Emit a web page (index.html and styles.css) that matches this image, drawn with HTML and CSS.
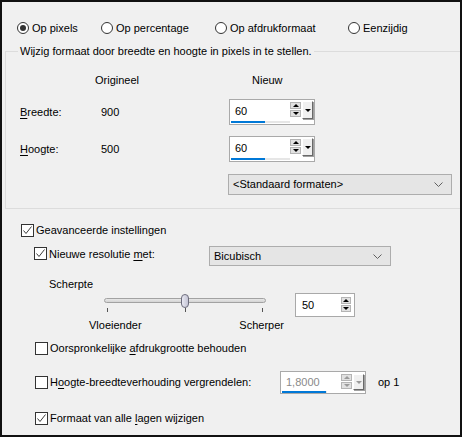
FILE: index.html
```html
<!DOCTYPE html>
<html lang="nl">
<head>
    <meta charset="UTF-8">
    <title>Formaat wijzigen</title>
    <link rel="stylesheet" href="styles.css">
</head>
<body>
    <div class="dialog">
        <div class="modes">
            <label class="radio-item"><span class="radio on"></span>Op pixels</label>
            <label class="radio-item"><span class="radio"></span>Op percentage</label>
            <label class="radio-item"><span class="radio"></span>Op afdrukformaat</label>
            <label class="radio-item"><span class="radio"></span>Eenzijdig</label>
        </div>

        <fieldset class="group">
            <legend>Wijzig formaat door breedte en hoogte in pixels in te stellen.</legend>
            <div class="size-grid">
                <span class="head"></span>
                <span class="head orig">Origineel</span>
                <span class="head new">Nieuw</span>

                <span class="lbl"><u>B</u>reedte:</span>
                <span class="val">900</span>
                <div class="spin">
                    <div class="spin-main">
                        <span class="spin-val">60</span>
                        <span class="spin-bar"><b style="width:34px"></b></span>
                    </div>
                    <div class="spin-btns"><i class="up"></i><i class="dn"></i></div>
                    <div class="spin-drop"><i class="dn"></i></div>
                </div>

                <span class="lbl"><u>H</u>oogte:</span>
                <span class="val">500</span>
                <div class="spin">
                    <div class="spin-main">
                        <span class="spin-val">60</span>
                        <span class="spin-bar"><b style="width:34px"></b></span>
                    </div>
                    <div class="spin-btns"><i class="up"></i><i class="dn"></i></div>
                    <div class="spin-drop"><i class="dn"></i></div>
                </div>

                <div class="select preset">
                    <span>&lt;Standaard formaten&gt;</span>
                    <svg class="chev" width="9" height="5" viewBox="0 0 9 5"><polyline points="0.5,0.5 4.5,4.5 8.5,0.5" fill="none" stroke="#606060"/></svg>
                </div>
            </div>
        </fieldset>

        <div class="check-row first">
            <span class="check on"><svg width="11" height="11" viewBox="0 0 11 11"><polyline points="1.5,5.5 4,8.5 9.5,1.5" fill="none" stroke="#3c3c3c" stroke-width="1"/></svg></span>
            <span>Geavanceerde instellingen</span>
        </div>

        <div class="check-row resample">
            <span class="check on"><svg width="11" height="11" viewBox="0 0 11 11"><polyline points="1.5,5.5 4,8.5 9.5,1.5" fill="none" stroke="#3c3c3c" stroke-width="1"/></svg></span>
            <span class="resample-text">Nieuwe resolutie <u>m</u>et:</span>
            <div class="select method">
                <span>Bicubisch</span>
                <svg class="chev" width="9" height="5" viewBox="0 0 9 5"><polyline points="0.5,0.5 4.5,4.5 8.5,0.5" fill="none" stroke="#606060"/></svg>
            </div>
        </div>

        <div class="sharpness">
            <div class="sharp-label">Scherpte</div>
            <div class="sharp-row">
                <div class="slider">
                    <div class="slider-track">
                        <span class="track"></span>
                        <span class="thumb"></span>
                    </div>
                    <div class="ticks"><i></i><i></i><i></i></div>
                    <div class="slider-labels"><span>Vloeiender</span><span>Scherper</span></div>
                </div>
                <div class="spin small">
                    <div class="spin-main">
                        <span class="spin-val">50</span>
                    </div>
                    <div class="spin-btns"><i class="up"></i><i class="dn"></i></div>
                </div>
            </div>
        </div>

        <div class="check-row sub keep">
            <span class="check"></span>
            <span>Oorspronkelijke <u>a</u>fdrukgrootte behouden</span>
        </div>

        <div class="check-row sub lock">
            <span class="check"></span>
            <span class="lock-text">H<u>o</u>ogte-breedteverhouding vergrendelen:</span>
            <div class="spin disabled">
                <div class="spin-main">
                    <span class="spin-val">1,8000</span>
                    <span class="spin-bar"><b style="width:44px"></b></span>
                </div>
                <div class="spin-btns"><i class="up"></i><i class="dn"></i></div>
                <div class="spin-drop"><i class="dn"></i></div>
            </div>
            <span class="ratio">op 1</span>
        </div>

        <div class="check-row sub layers">
            <span class="check on"><svg width="11" height="11" viewBox="0 0 11 11"><polyline points="1.5,5.5 4,8.5 9.5,1.5" fill="none" stroke="#3c3c3c" stroke-width="1"/></svg></span>
            <span>Formaat van alle <u>l</u>agen wijzigen</span>
        </div>
    </div>
</body>
</html>
```

FILE: styles.css
```css
* {
    box-sizing: border-box;
}
body {
    margin: 0;
    font-family: "Liberation Sans", Arial, sans-serif;
    font-size: 11px;
    line-height: 13px;
    color: #000;
    background-color: #f0f0f0;
}
u {
    text-decoration-thickness: 1px;
    text-underline-offset: 2px;
}
.dialog {
    width: 462px;
    height: 437px;
    border: 2px solid #111;
    background-color: #f0f0f0;
    padding: 18px 0 0 3px;
    overflow: hidden;
}

/* radio row */
.modes {
    display: grid;
    grid-template-columns: 84px 114px 133px auto;
    padding-left: 12px;
    height: 16px;
    align-items: center;
}
.radio-item {
    display: flex;
    align-items: center;
    gap: 3px;
}
.radio {
    width: 12px;
    height: 12px;
    border: 1px solid #333;
    border-radius: 50%;
    background-color: #fff;
    display: flex;
    align-items: center;
    justify-content: center;
}
.radio.on::after {
    content: "";
    width: 6px;
    height: 6px;
    border-radius: 50%;
    background-color: #333;
}

/* group box */
.group {
    margin: 9px 0 0 0;
    border: 1px solid #dcdcdc;
    border-right: none;
    padding: 13px 0 14px 12px;
    min-width: 0;
}
.group legend {
    padding: 0 2px;
}
.size-grid {
    display: grid;
    grid-template-columns: 75px 134px 1fr;
    grid-template-rows: 17px 26px 26px 21px;
    row-gap: 11px;
    align-items: center;
    padding-left: 2px;
}
.size-grid .head {
    align-self: start;
    padding-top: 3px;
}
.head.new {
    padding-left: 23px;
}
.val {
    padding-left: 6px;
}

/* spin boxes */
.spin {
    display: flex;
    align-items: flex-start;
    width: 86px;
    height: 26px;
    border: 1px solid #a9a9a9;
    background-color: #fff;
    padding: 1px 1px 0 1px;
}
.spin-main {
    flex: 1;
    display: flex;
    flex-direction: column;
    height: 22px;
    justify-content: space-between;
}
.spin-val {
    padding: 4px 0 0 4px;
}
.spin-bar {
    display: block;
    height: 2px;
    background-color: #e6e6e6;
}
.spin-bar b {
    display: block;
    height: 2px;
    background-color: #0078d7;
}
.spin-btns {
    display: flex;
    flex-direction: column;
    gap: 1px;
    margin-top: 1px;
    width: 11px;
}
.spin-btns i,
.spin-drop,
.spin-drop i {
    display: flex;
    align-items: center;
    justify-content: center;
}
.spin-btns i {
    height: 7px;
    background-color: #e1e1e1;
    border: 1px solid #b4b4b4;
}
.spin-btns i::after,
.spin-drop i::after {
    content: "";
    border-left: 3px solid transparent;
    border-right: 3px solid transparent;
}
.spin-btns .up::after {
    border-bottom: 3px solid #000;
}
.spin-btns .dn::after,
.spin-drop .dn::after {
    border-top: 3px solid #000;
}
.spin-drop {
    width: 11px;
    height: 18px;
    margin-left: 1px;
    background-color: #f0f0f0;
    border: 1px solid;
    border-color: #fff #696969 #696969 #fff;
    box-shadow: 1px 1px 0 #a0a0a0;
}
.spin.small {
    width: 60px;
    height: 24px;
}
.spin.small .spin-val {
    padding-left: 5px;
}
.spin.small .spin-btns {
    margin-top: 2px;
    margin-right: 2px;
    width: 10px;
}
.spin.disabled {
    width: 86px;
    height: 23px;
}
.spin.disabled .spin-main {
    height: 20px;
}
.spin.disabled .spin-val {
    color: #8a8a8a;
    padding-top: 3px;
}
.spin.disabled .spin-bar {
    margin-right: 14px;
}
.spin.disabled .spin-btns .up::after {
    border-bottom-color: #9a9a9a;
}
.spin.disabled .spin-btns .dn::after,
.spin.disabled .spin-drop .dn::after {
    border-top-color: #9a9a9a;
}
.spin.disabled .spin-drop {
    height: 16px;
    margin-top: 1px;
}

/* drop-down lists */
.select {
    display: flex;
    align-items: center;
    justify-content: space-between;
    background-color: #e5e5e5;
    border: 1px solid #adadad;
    padding: 0 8px 0 4px;
    height: 21px;
}
.preset {
    grid-column: 3;
    width: 224px;
    margin: 2px 0 0 -1px;
}
.method {
    width: 182px;
    height: 20px;
}

/* checkboxes */
.check-row {
    display: flex;
    align-items: center;
    gap: 2px;
}
.check {
    width: 13px;
    height: 13px;
    border: 1px solid #333;
    background-color: #fff;
    display: flex;
    align-items: center;
    justify-content: center;
}
.check-row.first {
    margin-top: 15px;
    padding-left: 16px;
}
.check-row.resample {
    margin-top: 9px;
    padding-left: 29px;
    align-items: flex-start;
}
.resample .check {
    margin-top: 1px;
}
.resample-text {
    width: 158px;
    padding-top: 2px;
}
.check-row.sub {
    padding-left: 30px;
}

/* sharpness slider */
.sharpness {
    padding-left: 44px;
    margin-top: 12px;
}
.sharp-row {
    display: flex;
    align-items: flex-start;
    gap: 11px;
    margin-top: 2px;
    padding-left: 40px;
}
.slider {
    width: 195px;
    margin-top: 1px;
}
.slider-track {
    position: relative;
    height: 14px;
    margin-left: 15px;
    width: 162px;
}
.track {
    position: absolute;
    left: 0;
    right: 0;
    top: 4px;
    height: 5px;
    border: 1px solid #a2a2a2;
    border-radius: 3px;
    background: linear-gradient(#e7e7e7, #d4d4d4);
}
.thumb {
    position: absolute;
    left: 77px;
    top: 0;
    width: 8px;
    height: 14px;
    border: 1px solid #6c6c7c;
    border-radius: 4px;
    background: linear-gradient(to right, #e8e8f2, #c4c4d4);
}
.ticks {
    display: flex;
    justify-content: space-between;
    margin-left: 18px;
    width: 156px;
    height: 4px;
}
.ticks i {
    width: 1px;
    height: 4px;
    background-color: #555;
}
.slider-labels {
    display: flex;
    justify-content: space-between;
    margin-top: 7px;
}

.check-row.keep {
    margin-top: 10px;
}
.check-row.lock {
    margin-top: 16px;
}
.lock-text {
    width: 228px;
}
.ratio {
    margin-left: 10px;
}
.check-row.layers {
    margin-top: 18px;
}
```
